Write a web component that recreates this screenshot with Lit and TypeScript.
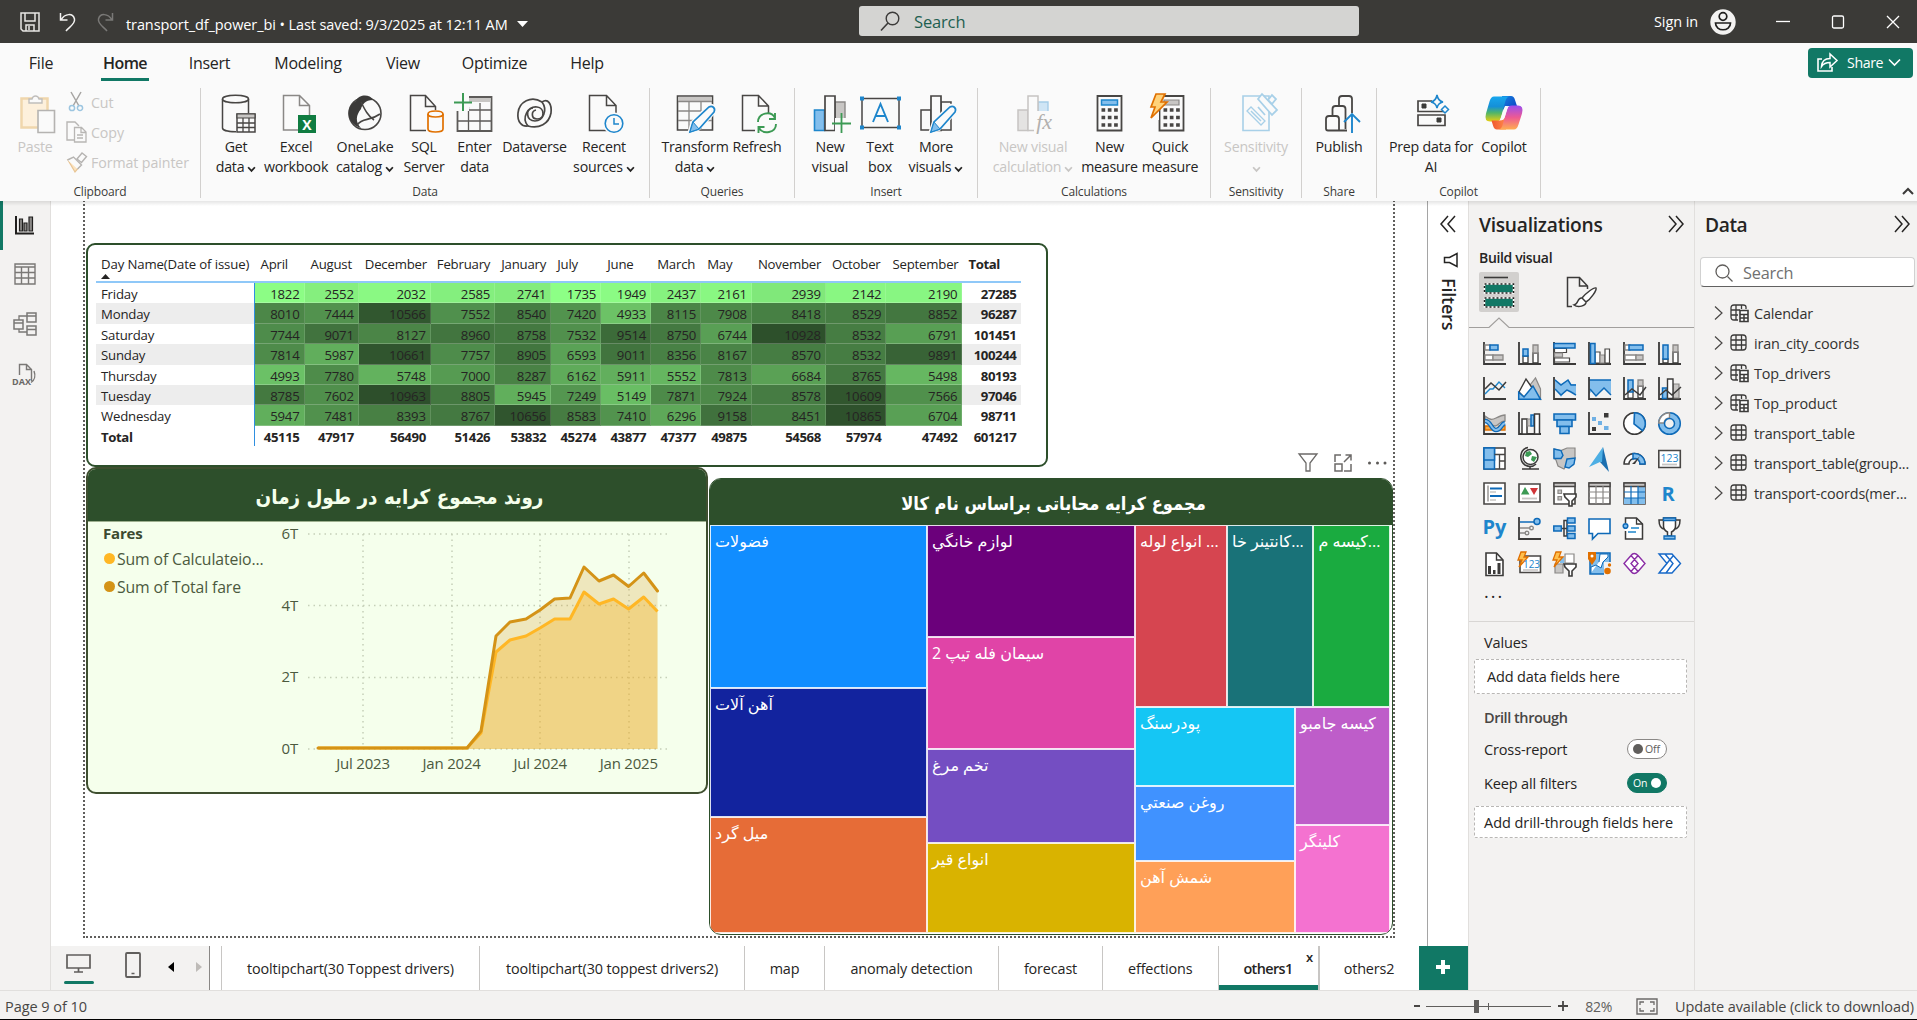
import { LitElement, html, svg, css, nothing } from "lit";
import { customElement, property } from "lit/decorators.js";
import { classMap } from "lit/directives/class-map.js";
import { styleMap } from "lit/directives/style-map.js";

type Shape = [d: string, fill?: string, stroke?: string, width?: number, dash?: string];
interface Icon { w: number; h: number; shapes: Shape[]; text?: [string, number, number, number, string, string] }

const r = (x: number, y: number, w: number, h: number) => `M${x} ${y}h${w}v${h}h${-w}z`;
const c = (x: number, y: number, q: number) => `M${x - q} ${y}a${q} ${q} 0 1 0 ${2 * q} 0a${q} ${q} 0 1 0 ${-2 * q} 0z`;

const N = "none";
const K = "#484644";
const D = "#3b3a39";
const G = "#8a8886";
const LG = "#c8c6c4";
const BF = "#83beec";
const BS = "#0e6ab8";
const B = "#1e86cc";
const W = "#ffffff";
const P = "#fafafa";
const OR = "#e07000";
const AXIS: Shape = ["M1 0V22H23", N, D, 1.8];
const FILE = "M9.500 2.500h16l10 10v24.500H9.500zM25.500 2.500v10h10";
const BOLT = "M8 0H3L0 8h4L1 15L10 5H6z";

const icons: Record<string, Icon> = {
  save: { w: 20, h: 20, shapes: [["M1 1h18v18H3l-2-2z", N, "#e8e6e4", 1.5], ["M5 1v8h10V1M6 19v-6h8v6M9 14v4", N, "#e8e6e4", 1.5]] },
  undo: { w: 18, h: 20, shapes: [["M1.500 1v7h7M2 8C6 1 14 1 15.500 7C16.500 12 10 15 7 19", N, "#f3f2f1", 1.5]] },
  redo: { w: 18, h: 20, shapes: [["M16.500 1v7h-7M16 8C12 1 4 1 2.500 7C1.500 12 8 15 11 19", N, "#7a7977", 1.5]] },
  find: { w: 20, h: 20, shapes: [[c(12.500, 7.500, 6.300), N, D, 1.4], ["M8 12L1 19.500", N, D, 1.6]] },
  user: { w: 26, h: 26, shapes: [[c(13, 13, 12.700), "#f3f2f1"], [c(13, 7.500, 3.800), N, "#201f1e", 1.7], ["M5.500 14h15c0 9-15 9-15 0z", N, "#201f1e", 1.7]] },
  min: { w: 14, h: 14, shapes: [["M0 6.500h14", N, W, 1.3]] },
  max: { w: 14, h: 14, shapes: [["M3 1h8q1.500 0 1.500 1.500v9q0 1.500-1.500 1.500H3q-1.500 0-1.500-1.500v-9Q1.500 1 3 1z", N, W, 1.3]] },
  close: { w: 14, h: 14, shapes: [["M1 1l12 12M13 1L1 13", N, W, 1.3]] },
  share: { w: 21, h: 19, shapes: [["M5 6H1v12h14v-4", N, W, 1.6], ["M4.500 13.500C5 7 8.500 5.500 13 5.500V1l7 6.500l-7 6.500V9.500C9 9.500 6.500 10.500 4.500 13.500z", N, W, 1.5]] },
  paste: { w: 44, h: 40, shapes: [["M8.500 5.500h26v29h-26z", "#fdf0dc", "#f0d6ac", 2.5], ["M16 9V6h3c1-4 6-4 7 0h3v4H16z", P, "#c0bebc", 1.4], ["M25 17.500h16.500v22H25z", P, "#b5b3b1", 1.6]] },
  cut: { w: 22, h: 22, shapes: [["M5 1l8 14M15 1L7 15", N, "#a6a4a2", 1.500], [c(6, 17, 2.600), N, "#9cc5e0", 1.500], [c(14, 17, 2.600), N, "#9cc5e0", 1.500]] },
  copy: { w: 22, h: 22, shapes: [["M9 19H1V1h8l4 4", N, "#b8b6b4", 1.400], ["M8.500 6.500h7l4.500 4.500v10H8.500zM15 6.500v5h5M11 14h6M11 17h6", P, "#b8b6b4", 1.300]] },
  painter: { w: 22, h: 22, shapes: [["M2 9l9 3l3 3l-5 6z", "#fbe3c0", "#e8c493", 1.200], ["M1.500 9l6-3l8 8l-4 4", P, "#b5b3b1", 1.400], ["M11 8l5-6l4.500 3.500l-5 6z", P, "#b5b3b1", 1.400]] },
  getdata: { w: 44, h: 40, shapes: [["M8.500 6v29c0 5 26 5 26 0V6", P, K, 1.500], ["M8.500 6c0-5 26-5 26 0s-26 5-26 0z", P, K, 1.500], [r(22, 20, 20, 20), P], [r(23, 21, 18, 18), P, K, 1.500], [r(23, 21, 18, 4), LG, K, 1.200], ["M29 25v14M35 25v14M23 30h18M23 34.500h18", N, K, 1.300]] },
  excel: { w: 44, h: 40, shapes: [[FILE, P, G, 1.500], [r(24, 22, 18, 18), "#107c41"]], text: ["X", 33, 36.500, 14, "#ffffff", "bold"] },
  onelake: { w: 44, h: 40, shapes: [[c(22, 20.500, 16), P, K, 1.600], ["M13 8C16 1 27 1 30 7C22 7 19 12 18 16C13 22 12 29 18 35C3 30 2 14 13 8z", D], ["M18 9c4 8 7 14 13 18M14 32c6-8 12-3 23-11", N, K, 1.600]] },
  sql: { w: 44, h: 40, shapes: [["M8.500 2.500h15l10 11v24H8.500zM23.500 2.500v11h10", P, K, 1.500], [r(24, 17, 19, 23), P], ["M26 21v15c0 4 15 4 15 0V21", P, OR, 1.700], ["M26 21c0-4 15-4 15 0s-15 4-15 0z", P, OR, 1.700]] },
  enter: { w: 44, h: 40, shapes: [[r(4.500, 4, 34, 34), P, "#5c5a58", 1.800], [r(16, 5, 21.500, 4), LG], ["M5 17h33M5 28h33M15.500 14v24M27 10v28", N, "#5c5a58", 1.300], [r(1, 1, 15, 17), P], ["M10 0v18M1 9.500h18", N, "#3c9a54", 2]] },
  dataverse: { w: 44, h: 40, shapes: [["M29 9C18 2 6 9 5 20c-1 9 4 14 10 13c-7-8 0-20 9-19c8 1 8 12 0 12c-6 0-6-8-1-9", N, K, 1.700], ["M15 33c11 3 21-2 23-13c1-9-3-15-9-11c6 8 1 19-7 19c-9 0-10-12-2-13", N, K, 1.700]] },
  recent: { w: 44, h: 40, shapes: [["M7.500 2.500h17l9.500 10v25H7.500zM24.500 2.500v10h9.500", P, K, 1.500], [c(32, 30.500, 11), P], [c(32, 30.500, 8.800), P, B, 1.600], ["M32 25v6h5", N, B, 1.500]] },
  transform: { w: 44, h: 40, shapes: [[r(4.500, 3, 35, 34), P, K, 1.600], [r(5.500, 4, 33, 4), LG], ["M5 8.500h34M5 18h34M5 27.500h34M16 9v28M28 9v28", N, G, 1.300], ["M17 38l3-9L36 13c3-1 6 1 6 5L25 36z", P, P, 4], ["M17 39l3-10L36 14c3-2 7 1 5 5L26 36z", P, B, 1.700], ["M17 39l3-10l6 7z", BF, B, 1]] },
  refresh: { w: 44, h: 40, shapes: [["M7.500 2.500h16l10 10.500v24.500H7.500zM23.500 2.500v10.500h10", P, K, 1.500], [r(20, 20, 22, 20), P], ["M23 29c0-9 13-12 17-4M40 20v6h-6M41 31c0 9-13 11-17 4M23.500 40v-6h6", N, "#3c9a54", 1.900]] },
  newvisual: { w: 44, h: 40, shapes: [[r(6.500, 17, 10, 20.500), BF, B, 1.600], [r(27, 9, 10, 27), LG, G, 1.400], [r(17, 3, 10, 34.500), P, K, 1.700], [r(27, 25, 15, 15), P], ["M33.500 20v20M24 30.500h19", N, "#3c9a54", 1.800]] },
  textbox: { w: 44, h: 40, shapes: [[r(4, 5.500, 37, 29), P, K, 1.500], [r(2, 3.500, 4, 4), B], [r(39, 3.500, 4, 4), B], [r(2, 32.500, 4, 4), B], [r(39, 32.500, 4, 4), B], ["M15 29L22.500 11L30 29M18 23h9", N, B, 1.900]] },
  morevisuals: { w: 44, h: 40, shapes: [[r(7, 17, 10, 20), P, K, 1.500], [r(27, 9, 10, 28), P, K, 1.500], [r(17, 3, 10, 34.500), P, K, 1.700], ["M17 38l3-9L36 13c3-1 6 1 6 5L25 36z", P, P, 4], ["M17 39l3-10L36 14c3-2 7 1 5 5L26 36z", P, B, 1.700], ["M17 39l3-10l6 7z", BF, B, 1]] },
  calcvisual: { w: 44, h: 40, shapes: [[r(7, 17, 10, 20.500), "#e4e3e2", "#c6c4c2", 1.500], [r(27, 9, 10, 16), "#cfe5f5", "#a5cde8", 1.400], [r(17, 3, 10, 34.500), P, "#c6c4c2", 1.500], [r(23, 18, 20, 22), P]], text: ["fx", 33, 36, 22, "#b2b0ae", "fx"] },
  calculator: { w: 44, h: 40, shapes: [[r(9.500, 3, 24, 34.500), P, K, 1.800], [r(13.500, 7, 16, 5), BF, B, 1.500], ["M13.500 17h16.500M13.500 24.500h16.500M13.500 32h16.500", N, K, 3.700, "3.700 2.600"]] },
  quick: { w: 44, h: 40, shapes: [[r(11.500, 3, 24, 34.500), P, K, 1.800], [r(16, 7, 15, 5), LG, G, 1.200], ["M15.500 17h16.500M15.500 24.500h16.500M15.500 32h16.500", N, K, 3.700, "3.700 2.600"], [r(2, 0, 9, 27), P], ["M8 1h9L13 9h6L3 25l4-11H3z", "#ffd27a", OR, 1.700]] },
  sensitivity: { w: 44, h: 40, shapes: [["M9 3h26v34.500H9z", P, "#a8d0e8", 1.600], ["M13 18l4-4l14 14l-4 4z", P, "#a8d0e8", 1.300], ["M17 18l10 10", N, "#a8d0e8", 1.500], ["M24 6l4-5l15 16l-5 5z", P, "#a8d0e8", 1.800], ["M34 7l4-5l4 4l-4 5zM24 14l7 8", P, "#a8d0e8", 1.800]] },
  publish: { w: 44, h: 40, shapes: [["M22 14V6q0-3 3-3h7q3 0 3 3v14M15.500 23V16q0-3 3-3h7q3 0 3 3v20M9 36V26q0-3 3-3h7q3 0 3 3v11.500H11q-2 0-2-2zM22 37.500h8", N, K, 1.800], ["M35 40V21M27 29l8-8l8 8", N, B, 1.900]] },
  prep: { w: 44, h: 40, shapes: [["M23 8H9v10.500h27V18M9 22h27v10.500H9z", N, K, 1.700], [r(13, 11, 4, 4), D, D, 1], [r(28, 25, 4, 4), D, D, 1], ["M28 2q1 6 6 7q-5 1-6 6q-1-5-6-6q5-1 6-7z", P, B, 1.600], ["M36 13l3.500 3.500L36 20l-3.500-3.500z", P, B, 1.500]] },
  report: { w: 20, h: 20, shapes: [["M1 1v17.500h18", N, "#201f1e", 2], [r(4.500, 4, 3, 12), G, "#201f1e", 1.200], [r(9, 8, 3, 8), G, "#201f1e", 1.200], [r(14, 2, 3.500, 14), G, "#201f1e", 1.200]] },
  table: { w: 22, h: 22, shapes: [[r(1, 1, 20, 20), N, "#7a7876", 1.400], ["M1 4h20M1 9.500h20M1 15h20M7.500 4v17M14.500 4v17", N, "#7a7876", 1.400]] },
  model: { w: 24, h: 24, shapes: [[r(1, 8, 9, 9), N, "#7a7876", 1.500], [r(14, 1, 9, 9), N, "#7a7876", 1.500], [r(14, 14, 9, 9), N, "#7a7876", 1.500], ["M1 11h9M14 4h9M14 17.500h9M6 8V4h8M6 17v3h8", N, "#7a7876", 1.300]] },
  dax: { w: 24, h: 24, shapes: [["M6.500 12V1.500h7l5 5V18M13.500 1.500v5h5M21 8c1.500 4 1 9-3 11.500", N, "#7a7876", 1.400]], text: ["DAX", 8.500, 21.500, 9, "#6a6866", "bold"] },
  filter: { w: 20, h: 20, shapes: [["M1 1h18L12 10v8H8v-8z", N, "#6c6a68", 1.300]] },
  focus: { w: 20, h: 20, shapes: [["M8 2H2v7M18 11v7h-7M2 11h7v7H2zM11 9l7-7M12.500 2H18v5.500", N, "#6c6a68", 1.500]] },
  dots: { w: 20, h: 20, shapes: [[c(1.500, 10, 1.500) + c(9.500, 10, 1.500) + c(17, 10, 1.500), "#5c5a58"]] },
  monitor: { w: 26, h: 20, shapes: [[r(1, 1, 23, 13), N, "#605e5c", 1.700], ["M12.500 14v4M8 18h9", N, "#605e5c", 1.700]] },
  phone: { w: 18, h: 26, shapes: [["M3 1h12q1 0 1 1v22q0 1-1 1H3q-1 0-1-1V2Q2 1 3 1z", N, "#605e5c", 1.800], ["M7.500 21.500h3", N, "#605e5c", 1.500]] },
  fit: { w: 22, h: 17, shapes: [[r(1, 1, 20, 15), N, "#6c6a68", 1.400], ["M4 7V4h4M14 4h4v3M18 10v3h-4M8 13H4v-3", N, "#6c6a68", 1.300]] },
  less: { w: 18, h: 18, shapes: [["M9 1L2 9l7 8M16 1L9 9l7 8", N, "#252423", 1.500]] },
  more: { w: 18, h: 18, shapes: [["M2 1l7 8l-7 8M9 1l7 8l-7 8", N, "#252423", 1.500]] },
  funnel: { w: 16, h: 16, shapes: [["M14 1.500v13L6.500 10.500H1.500v-5h5z", N, "#252423", 1.500]] },
  build: { w: 32, h: 32, shapes: [["M1 1.500h24", N, D, 1.600], [r(1.500, 8, 29, 9), "#117865", W, 1.500], [r(1.500, 8, 29, 9), N, "#201f1e", 1.500, "2 2"], [r(1.500, 22, 29, 9), "#117865", W, 1.500], [r(1.500, 22, 29, 9), N, "#201f1e", 1.500, "2 2"]] },
  format: { w: 32, h: 32, shapes: [["M6 30.500H1.500V1.500h12l8 8.500v3M13.500 1.500V10h8", N, D, 1.500], ["M30 12c1 2-5 11-10 14l-4-4c4-5 12-11 14-10zM16 22c-5-1-3 6-8 7c4 3 12 1 12-3", W, D, 1.500]] },
  loupe: { w: 18, h: 18, shapes: [[c(7.500, 7.500, 6.500), N, "#605e5c", 1.300], ["M12.500 12.500L17.500 17.500", N, "#605e5c", 1.300]] },
  expand: { w: 9, h: 16, shapes: [["M1 1.500l7 6.500l-7 6.500", N, "#484644", 1.200]] },
  tbl: { w: 20, h: 20, shapes: [["M4 2h9q3 0 3 3v9q0 3-3 3H4q-3 0-3-3V5q0-3 3-3zM1 7h15M1 12h15M6 2v15M11.500 2v15", N, D, 1.300]] },
  tblcalc: { w: 20, h: 20, shapes: [["M8 17H4q-3 0-3-3V5q0-3 3-3h9q3 0 3 2v2M1 7h9M1 12h7M6 2v15M11.500 2v4", N, D, 1.300], [r(10, 7.500, 8, 11), W, D, 1.600], ["M10 11.500h8M10 15h8M14 11v7", N, D, 1.500]] },

  v0: { w: 23, h: 23, shapes: [AXIS, [r(2, 3, 5, 5), W, G, 1.300], [r(7, 3, 8, 5), BF, BS, 1.500], [r(2, 13, 8, 5), W, G, 1.300], [r(10, 13, 10, 5), LG, G, 1.300]] },
  v1: { w: 23, h: 23, shapes: [AXIS, [r(5, 14, 5, 7), W, D, 1.300], [r(5, 7, 5, 7), BF, BS, 1.500], [r(15, 11, 5, 10), W, D, 1.300], [r(15, 3, 5, 8), LG, G, 1.300]] },
  v2: { w: 23, h: 23, shapes: [AXIS, [r(1.500, 6.500, 12, 4), W, K, 1.200], [r(1.500, 11, 8, 4), LG, G, 1.200], [r(1.500, 16, 15, 4), W, K, 1.200], [r(1, 1.500, 21, 4.500), BF, BS, 1.500]] },
  v3: { w: 23, h: 23, shapes: [AXIS, [r(7, 10, 5, 11), W, K, 1.200], [r(12, 13, 5, 8), LG, G, 1.200], [r(17, 7, 4.500, 14), W, K, 1.200], [r(2.500, 1.500, 4.500, 20), BF, BS, 1.500]] },
  v4: { w: 23, h: 23, shapes: [AXIS, [r(2, 3, 5, 5), W, G, 1.300], [r(6, 3, 14, 5), BF, BS, 1.500], [r(2, 13, 11, 5), W, G, 1.300], [r(13, 13, 7, 5), LG, G, 1.300]] },
  v5: { w: 23, h: 23, shapes: [AXIS, [r(5, 17, 5, 4), W, D, 1.300], [r(5, 3, 5, 14), BF, BS, 1.500], [r(15, 10, 5, 11), W, D, 1.300], [r(15, 3, 5, 7), LG, G, 1.300]] },
  v6: { w: 23, h: 23, shapes: [AXIS, ["M2 17L7 12l3 0L16 5l6 6", N, B, 1.400], ["M2 12l6-6l8 7l7-8", N, D, 1.500]] },
  v7: { w: 23, h: 23, shapes: [["M12 8L17.500 1L22.500 12v10z", LG, G, 1.200], ["M1 15L8 2l7 10L8 22z", W, D, 1.400], ["M.7 22.300v-7L6 20L15 9l7.500 13.300z", BF, BS, 1.500]] },
  v8: { w: 23, h: 23, shapes: [AXIS, ["M2 2l6 5l7-4l3 4h5v10l-5-2l-4-3l-6 8L2 12z", BF], ["M2 3l6 5l7-5l3 5h5M2 12l6 6l6-5l4 2l5 3", N, BS, 1.500]] },
  v9: { w: 23, h: 23, shapes: [["M1 3h22v14l-7-6l-8 8l-4-5l-3 3z", BF], ["M1 3h22M2 12l6 7l8-8l7 7", N, BS, 1.500], AXIS] },
  v10: { w: 23, h: 23, shapes: [AXIS, [r(5, 14, 5, 7), W, D, 1.200], [r(5, 3, 5, 12), BF, BS, 1.500], [r(15, 9, 5, 12), W, D, 1.300], [r(15, 3, 5, 6), LG, G, 1.300], ["M2 18l7-6l8 6l6-8", N, D, 1.500]] },
  v11: { w: 23, h: 23, shapes: [AXIS, [r(4.500, 11, 5, 10.500), BF, BS, 1.500], [r(15, 7, 6, 14), LG, G, 1.200], [r(9.500, 2, 5.500, 19.500), W, D, 1.400], ["M2 18l6-5l6 5l9-8", N, D, 1.500]] },
  v12: { w: 23, h: 23, shapes: [["M2 14h6l3 4h11v-4h-6l-3 4H2z", "#f4a640", OR, 1.300], ["M2 4c5 4 7 4 11 2s6-3 9-3v6c-5 0-7 5-10 5S7 9 2 9z", LG, G, 1.300], ["M2 9c6 0 6 9 11 9s5-6 9-7", N, BS, 4.500], ["M2 9c6 0 6 9 11 9s5-6 9-7", N, BF, 2], AXIS] },
  v13: { w: 23, h: 23, shapes: [AXIS, [r(4, 7, 5, 15), W, D, 1.500], [r(9.500, 7, 4, 7), LG, G, 1.200], [r(13, 3, 3, 11), BF, BS, 1.500], [r(16.500, 2, 5, 20), W, D, 1.500]] },
  v14: { w: 23, h: 23, shapes: [[r(1, 2, 21.500, 6), BF, BS, 1.600], [r(4, 8, 15, 6.500), BF, BS, 1.600], [r(7, 14.500, 9, 7), BF, BS, 1.600]] },
  v15: { w: 23, h: 23, shapes: [AXIS, [r(4, 5, 4, 4) + r(10, 9, 4, 4) + r(16, 14, 4.500, 4), "#6fb0e4"], [r(16, 1, 4.500, 4.500) + r(4, 15, 4, 4), D]] },
  v16: { w: 23, h: 23, shapes: [[c(11.500, 11.500, 10.800), W, D, 1.500], ["M11.500.700a10.800 10.800 0 0 1 8 18L11 12z", BF, BS, 1.600]] },
  v17: { w: 23, h: 23, shapes: [[c(11.500, 11.500, 10.800), BF, BS, 1.500], ["M.700 11a10.800 10.800 0 0 1 10.800-10.300V6A6 6 0 0 0 6 11z", W, G, 1.400], [c(11.500, 11.500, 5), "#f3f2f1", BS, 1.500]] },
  v18: { w: 23, h: 23, shapes: [[r(1, 1, 21, 21), W, D, 1.500], [r(1, 1, 10.500, 21), BF, BS, 1.500], [r(1, 1, 10.500, 12), BF, BS, 1.500], ["M11.500 7.500H22M16.500 8v14M16.500 14H22", N, K, 1.300]] },
  v19: { w: 23, h: 23, shapes: [[c(12.500, 10, 7.500), W, D, 1.500], ["M8 5l4-1l2 3l-4 3l-3-1zM14 9l5 1l-3 5l-3-2z", "#3c9a54"], ["M10 0.500C1 2 1 14 7 18c4 2 8 2 11-1M12 19v3M4 22h17", N, D, 1.600]] },
  v20: { w: 23, h: 23, shapes: [["M1 2l7 1.500l6-2.500h8v11l-2 6l-7 1l-2 3l-6-3l-2-6l-2-2z", LG, G, 1.200], ["M1 2l7 1.500l2 5l-2 3H1z", BF, BS, 1.400], ["M14 12l8-1l-1 6l-5 4l-4-1z", BF, BS, 1.400]] },
  v21: { w: 23, h: 25, shapes: [["M15 0l6 25l-9-10z", "#1b6fb0"], ["M15 0l-1 15l-2 0L1 20z", "#4dafe4"]] },
  v22: { w: 23, h: 23, shapes: [["M1 17a10.500 10.500 0 0 1 21 0h-5a5.500 5.500 0 0 0-11 0z", W, D, 1.400], ["M10 6.500A10.500 10.500 0 0 1 22 17h-5a5 5 0 0 0-7-5z", BF, BS, 1.500], ["M9 17l8-8l-5 8z", D]] },
  v23: { w: 23, h: 23, shapes: [[r(.8, 3.500, 21.500, 17), W, K, 1.600], ["M4 17.500h15", N, LG, 1.800]], text: ["123", 11.500, 14.500, 10.500, "#1e86cc", "plain"] },
  v24: { w: 23, h: 23, shapes: [[r(1, 1, 21, 21), W, K, 1.600], ["M5 3.500v16", N, G, 1.300], ["M7 6.500h12M7 14h12", N, BS, 2], ["M7 10h6M7 18h6", N, LG, 1.600]] },
  v25: { w: 23, h: 23, shapes: [[r(1, 2, 21, 18), W, K, 1.600], ["M3 12.500L7 5l4.500 7.500z", "#3c9a54"], ["M12 6h8l-4 7z", "#d13438"], ["M4 16.500h15", N, LG, 1.800]] },
  v26: { w: 23, h: 25, shapes: [[r(1, 1, 21, 21), W, K, 1.600], [r(1, 1, 21, 3.500), LG, K, 1.300], [r(5, 8, 3.500, 3.500) + r(5, 14.500, 3.500, 3.500), LG, G, 1.200], ["M11 12h12v3l-4 4v5h-3v-5l-4-4z", W, D, 1.600]] },
  v27: { w: 23, h: 23, shapes: [[r(1, 1, 21, 21), W, K, 1.500], [r(1, 1, 21, 3.500), LG, K, 1.300], ["M1 10h21M1 16h21M8 4v18M15 4v18", N, G, 1.200]] },
  v28: { w: 23, h: 23, shapes: [[r(1, 1, 21, 21), W, K, 1.500], [r(15, 5, 7, 17) + r(1, 16, 21, 6), BF], [r(1, 1, 21, 3.500), LG, K, 1.300], ["M1 10h21M1 16h21M8 4v18M15 4v18", N, BS, 1.200]] },
  v29: { w: 23, h: 23, shapes: [], text: ["R", 10, 18.500, 20, "#1e86cc", "bold"] },
  v30: { w: 23, h: 23, shapes: [], text: ["Py", 11.500, 16.500, 20, "#1e86cc", "bold"] },
  v31: { w: 23, h: 23, shapes: [AXIS, ["M2 5h14", N, BS, 1.500], ["M2 11h10M2 16h6", N, G, 1.500], [c(19, 4.500, 3), BF, BS, 1.500], [c(13.500, 11, 1.800) + c(9, 16, 1.800), W, G, 1.400]] },
  v32: { w: 23, h: 23, shapes: [["M8 11.500h6M14 3.500V19h1M11 11.500V3.500h3M11 11.500V19h3", N, D, 1.500], [r(.8, 9, 7.500, 5), BF, BS, 1.500], [r(14.500, 1, 7.500, 5), BF, BS, 1.500], [r(14.500, 9, 7.500, 5), BF, BS, 1.500], [r(14.500, 16.500, 7.500, 5), BF, BS, 1.500]] },
  v33: { w: 23, h: 23, shapes: [["M1 2h21v14.500H10L4.500 22v-5.500H1z", W, BS, 1.600]] },
  v34: { w: 23, h: 23, shapes: [["M2.500 6V1h11l6 6v15h-17V14", W, D, 1.500], ["M13.500 1v6h6", N, D, 1.300], ["M8 11h8M5 15h8", N, B, 1.400], [c(2.500, 9, 2.300), BF, BS, 1.500]] },
  v35: { w: 23, h: 23, shapes: [["M5 3H1c0 6 2 9 6 9M18 3h4c0 6-2 9-6 9", N, D, 1.500], ["M5.500 1h12v8c0 3-2 5-4 6v4h-4v-4c-2-1-4-3-4-6z", W, D, 1.500], ["M5.500 1h12v2.500h-12z", BF, BS, 1.300], ["M6 22v-3h11v3z", BF, BS, 1.300]] },
  v36: { w: 23, h: 25, shapes: [["M3 1h10.500l6.500 7v15.500H3z", W, D, 1.600], ["M13.500 1v7H20", N, D, 1.400], [r(5, 14, 3, 8) + r(10, 18, 2.500, 4) + r(14.500, 11, 3, 11), D]] },
  v37: { w: 23, h: 25, shapes: [[r(2, 4, 20.500, 16.500), W, K, 1.600], ["M5 18h15", N, LG, 1.600], [BOLT, "#ffc04d", OR, 1.300]], text: ["123", 13.500, 15.500, 10, "#1e86cc", "plain"] },
  v38: { w: 23, h: 25, shapes: [[r(12, 2, 9, 9), W, G, 1.200], [r(2, 12, 8, 9), LG, G, 1.200], [r(7, 5, 4, 6), BF], ["M11 12h12v3l-4 4v5h-3v-5l-4-4z", W, D, 1.600], [BOLT, "#ffc04d", OR, 1.300]] },
  v39: { w: 23, h: 23, shapes: [[r(2, 1, 20, 21), BF, BS, 1.500], ["M3 21V15l5-2l5 3l2-6l5-5V2h-8l-1 8", W, BS, 1], [r(16, 10, 7, 13), "#f3f2f1"], ["M0 0h8v7l-4 6l-4-6z", OR], [c(4, 4, 1.500), W], [c(19.500, 19, 3.300) + c(21.500, 13, 1.700), OR]] },
  v40: { w: 23, h: 23, shapes: [["M1 11.500L8 3.500q3-4 7 0l7 8l-7 8q-4 4-7 0zM8 3.500l7 8l-7 8M15 3.500l-7 8l7 8", W, "#8a2da5", 1.400]] },
  v41: { w: 23, h: 23, shapes: [["M1 2h13l8.500 9.500L14 21H1l8-9.500zM7 2l8 9.500L8 21M15 4L1 21", W, "#1668c8", 1.400]] },
};

@customElement("pb-icon")
class PbIcon extends LitElement {
  static styles = css`
    :host { display: inline-block; line-height: 0; flex: none; }
    svg { display: block; overflow: visible; }
    .bold { font: 700 1px "Open Sans", sans-serif; letter-spacing: 0; }
    .plain { font: 400 1px "Open Sans", sans-serif; letter-spacing: 0; }
    .fx { font: italic 1px "Liberation Serif", serif; }
  `;
  @property() name = "";
  render() {
    const i = icons[this.name];
    if (!i) return nothing;
    const t = i.text;
    return html`<svg width=${i.w} height=${i.h} viewBox="0 0 ${i.w} ${i.h}">
      ${i.shapes.map(([d, f = N, s = N, w = 1, dash = N]) => svg`<path d=${d} fill=${f} stroke=${s} stroke-width=${w} stroke-dasharray=${dash}></path>`)}
      ${t ? svg`<text class=${t[5]} x=${t[1]} y=${t[2]} style=${styleMap({ fontSize: t[3] + "px" })} fill=${t[4]} text-anchor="middle">${t[0]}</text>` : nothing}
    </svg>`;
  }
}

@customElement("copilot-logo")
class CopilotLogo extends LitElement {
  static styles = css`:host { display: block; line-height: 0; } svg { display: block; }`;
  render() {
    return html`<svg width="44" height="40" viewBox="0 0 44 40">
      <defs>
        <linearGradient id="a" x1="0" y1="0" x2="0" y2="1"><stop offset="0" stop-color="#17a6ee"/><stop offset=".4" stop-color="#1590d8"/><stop offset=".65" stop-color="#4fb56a"/><stop offset="1" stop-color="#e8cf10"/></linearGradient>
        <linearGradient id="b" x1="0" y1="0" x2="0" y2="1"><stop offset="0" stop-color="#9a4df0"/><stop offset=".5" stop-color="#ee5a92"/><stop offset="1" stop-color="#ffae50"/></linearGradient>
        <linearGradient id="c" x1="0" y1="0" x2="1" y2="1"><stop offset="0" stop-color="#1583e0"/><stop offset="1" stop-color="#0c3cc0"/></linearGradient>
        <linearGradient id="d" x1="0" y1="0" x2="1" y2="0"><stop offset="0" stop-color="#f0562e"/><stop offset="1" stop-color="#ff8a4a"/></linearGradient>
      </defs>
      <path d="M20 3h9q3 0 4 4l2 6h-8q-5 0-6 5z" fill="url(#c)"/>
      <path d="M12 3.500h15q-3 1-4 6l-4 15q-1 4-5 4H8q-6 0-4-8l3.500-12Q9 3.500 12 3.500z" fill="url(#a)"/>
      <path d="M24 36.500h-9q-3 0-4-4l-1.500-5h8q5 0 6-5z" fill="url(#d)"/>
      <path d="M32 36.500H17q3-1 4-6l4-14q1-4 5-4h6q6 0 4 8l-3.500 11q-1.500 5-4.500 5z" fill="url(#b)"/>
      <path d="M25 13h-2l-5 14h2q2 0 3-4l3-9z" fill="#fafafa"/>
    </svg>`;
  }
}

interface Cmd { icon: string; w: number; lines: string[]; drop?: boolean; off?: boolean }
interface Group { name: string; w: number; pad: number; cmds: Cmd[] }

const groups: Group[] = [
  { name: "Data", w: 449, pad: 2, cmds: [
    { icon: "getdata", w: 66, lines: ["Get", "data"], drop: true },
    { icon: "excel", w: 54, lines: ["Excel", "workbook"] },
    { icon: "onelake", w: 84, lines: ["OneLake", "catalog"], drop: true },
    { icon: "sql", w: 34, lines: ["SQL", "Server"] },
    { icon: "enter", w: 67, lines: ["Enter", "data"] },
    { icon: "dataverse", w: 53, lines: ["Dataverse"] },
    { icon: "recent", w: 86, lines: ["Recent", "sources"], drop: true } ] },
  { name: "Queries", w: 145, pad: 2, cmds: [
    { icon: "transform", w: 86, lines: ["Transform", "data"], drop: true },
    { icon: "refresh", w: 38, lines: ["Refresh"] } ] },
  { name: "Insert", w: 183, pad: 8, cmds: [
    { icon: "newvisual", w: 54, lines: ["New", "visual"] },
    { icon: "textbox", w: 46, lines: ["Text", "box"] },
    { icon: "morevisuals", w: 66, lines: ["More", "visuals"], drop: true } ] },
  { name: "Calculations", w: 233, pad: 4, cmds: [
    { icon: "calcvisual", w: 102, lines: ["New visual", "calculation"], drop: true, off: true },
    { icon: "calculator", w: 51, lines: ["New", "measure"] },
    { icon: "quick", w: 70, lines: ["Quick", "measure"] } ] },
  { name: "Sensitivity", w: 91, pad: 0, cmds: [{ icon: "sensitivity", w: 90, lines: ["Sensitivity", ""], drop: true, off: true }] },
  { name: "Share", w: 75, pad: 0, cmds: [{ icon: "publish", w: 74, lines: ["Publish"] }] },
  { name: "Copilot", w: 164, pad: 9, cmds: [
    { icon: "prep", w: 90, lines: ["Prep data for", "AI"] },
    { icon: "copilot", w: 56, lines: ["Copilot"] } ] },
];

@customElement("pb-ribbon")
class PbRibbon extends LitElement {
  static styles = css`
    :host { display: flex; height: 120px; padding-top: 7px; box-sizing: border-box; background: #fafafa; color: #252423; font-size: 14.200px; letter-spacing: -0.220px; }
    .group { display: flex; flex-direction: column; height: 110px; box-sizing: border-box; border-right: 1px solid #d2d0ce; flex: none; }
    .clip { width: 201px; }
    .cmds { display: flex; height: 95px; flex: none; }
    .cmd { display: flex; flex-direction: column; align-items: center; flex: none; padding-top: 5px; }
    .cmd.paste { width: 70px; }
    .line { height: 20px; line-height: 20px; white-space: nowrap; display: flex; align-items: center; gap: 3px; flex: none; }
    .line.first { margin-top: 4px; }
    .off { color: #c8c6c4; }
    .name { text-align: center; font-size: 12px; line-height: 17px; color: #3b3a39; letter-spacing: -0.150px; }
    .drop { width: 9px; height: 7px; margin-top: 4px; }
    .side { display: flex; flex-direction: column; margin: -1px 0 0 -4px; letter-spacing: -0.080px; }
    .mini { display: flex; align-items: center; height: 30px; gap: 3px; color: #c8c6c4; white-space: nowrap; }
    .end { flex: 1; display: flex; align-items: flex-end; justify-content: flex-end; padding: 0 3px 6px 0; }
  `;
  private drop() {
    return html`<svg class="drop" viewBox="0 0 8 6"><path d="M1 1l3 3.200l3-3.200" fill="none" stroke="currentColor" stroke-width="1.600"></path></svg>`;
  }
  private cmd(x: Cmd) {
    return html`<div class=${classMap({ cmd: true, off: !!x.off })} style=${styleMap({ width: x.w + "px" })}>
      ${x.icon === "copilot" ? html`<copilot-logo></copilot-logo>` : html`<pb-icon name=${x.icon}></pb-icon>`}
      ${x.lines.map((l, i) => html`<div class=${classMap({ line: true, first: i === 0 })}>${l ? html`<span>${l}</span>` : nothing}${x.drop && i === x.lines.length - 1 ? this.drop() : nothing}</div>`)}
    </div>`;
  }
  render() {
    return html`
      <div class="group clip">
        <div class="cmds">
          <div class="cmd off paste"><pb-icon name="paste"></pb-icon><div class="line first">Paste</div></div>
          <div class="side">
            ${[["cut", "Cut"], ["copy", "Copy"], ["painter", "Format painter"]].map(([i, t]) => html`<div class="mini"><pb-icon name=${i}></pb-icon>${t}</div>`)}
          </div>
        </div>
        <div class="name">Clipboard</div>
      </div>
      ${groups.map((g) => html`<div class="group" style=${styleMap({ width: g.w + "px" })}>
        <div class="cmds" style=${styleMap({ paddingLeft: g.pad + "px" })}>${g.cmds.map((x) => this.cmd(x))}</div>
        <div class="name">${g.name}</div>
      </div>`)}
      <div class="end"><svg width="12" height="8" viewBox="0 0 12 8"><path d="M1 7l5-5l5 5" fill="none" stroke="#3b3a39" stroke-width="2"></path></svg></div>`;
  }
}

const months = ["April", "August", "December", "February", "January", "July", "June", "March", "May", "November", "October", "September"];
const days: [string, number[], number][] = [
  ["Friday", [1822, 2552, 2032, 2585, 2741, 1735, 1949, 2437, 2161, 2939, 2142, 2190], 27285],
  ["Monday", [8010, 7444, 10566, 7552, 8540, 7420, 4933, 8115, 7908, 8418, 8529, 8852], 96287],
  ["Saturday", [7744, 9071, 8127, 8960, 8758, 7532, 9514, 8750, 6744, 10928, 8532, 6791], 101451],
  ["Sunday", [7814, 5987, 10661, 7757, 8905, 6593, 9011, 8356, 8167, 8570, 8532, 9891], 100244],
  ["Thursday", [4993, 7780, 5748, 7000, 8287, 6162, 5911, 5552, 7813, 6684, 8765, 5498], 80193],
  ["Tuesday", [8785, 7602, 10963, 8805, 5945, 7249, 5149, 7871, 7924, 8578, 10609, 7566], 97046],
  ["Wednesday", [5947, 7481, 8393, 8767, 10656, 8583, 7410, 6296, 9158, 8451, 10865, 6704], 98711],
];
const totals = [45115, 47917, 56490, 51426, 53832, 45274, 43877, 47377, 49875, 54568, 57974, 47492];
const heat = (v: number) => {
  const t = (v - 1735) / (10963 - 1735);
  const m = (a: number, b: number) => Math.round(a + (b - a) * t);
  return `rgb(${m(141, 45)}, ${m(255, 79)}, ${m(134, 43)})`;
};

@customElement("matrix-visual")
class MatrixVisual extends LitElement {
  static styles = css`
    :host { display: block; box-sizing: border-box; background: #fff; border: 2px solid #2d4f2b; border-radius: 9px; padding: 6px 0 0 8px; color: #252423; font-size: 13.200px; letter-spacing: -0.200px; }
    .grid { display: grid; width: 926px; grid-template-columns: 159px 50px 54.300px 72px 64.400px 56px 50px 50px 50px 50.700px 74px 60.600px 76px 59px; grid-template-rows: 32px repeat(7, 20.400px) 20.400px; }
    .h { padding: 4px 0 0 6px; line-height: 19px; white-space: nowrap; border-bottom: 2px solid #8fc8f8; }
    .h.day { display: flex; flex-direction: column; letter-spacing: -0.130px; }
    .tri { width: 9px; height: 5px; background: #252423; clip-path: polygon(50% 0, 100% 100%, 0 100%); flex: none; }
    .day { padding-left: 5.500px; line-height: 22.500px; border-right: 1px solid #2f8fe0; }
    .h.day { border-right: 0; line-height: 19px; padding-left: 5.500px; }
    .num { padding-right: 5px; line-height: 22.500px; text-align: right; }
    .cell { border-right: 1px solid rgba(255, 255, 255, 0.130); border-bottom: 1px solid rgba(255, 255, 255, 0.220); padding-right: 4px; }
    .band { background: #ededed; }
    .b { font-weight: 700; letter-spacing: -0.400px; }
  `;
  render() {
    return html`<div class="grid">
      <div class="h day">Day Name(Date of issue)<span class="tri"></span></div>
      ${months.map((m) => html`<div class="h">${m}</div>`)}<div class="h b">Total</div>
      ${days.map(([d, v, s], i) => html`<div class=${classMap({ day: true, band: i % 2 === 1 })}>${d}</div>
        ${v.map((n) => html`<div class="num cell" style=${styleMap({ background: heat(n) })}>${n}</div>`)}
        <div class=${classMap({ num: true, b: true, band: i % 2 === 1 })}>${s}</div>`)}
      <div class="day b">Total</div>${totals.map((n) => html`<div class="num b">${n}</div>`)}<div class="num b">601217</div>
    </div>`;
  }
}

const xs = [481, 496, 510, 526, 540, 554.6, 570, 584, 599, 613.5, 628.6, 643.7, 657.5];
const upper = [732, 637, 623, 620, 611, 600, 599, 568, 582, 576, 587.5, 574, 592];
const lower = [734, 653, 641, 637, 629, 620, 620, 593, 605, 600, 610, 598, 612.5];
const path = (ys: number[]) => "M318 749H467" + xs.map((x, i) => `L${x} ${ys[i]}`).join("");

@customElement("trend-visual")
class TrendVisual extends LitElement {
  static styles = css`
    :host { display: flex; flex-direction: column; box-sizing: border-box; border: 2px solid #3f4f30; border-radius: 10px; overflow: hidden; background: #f5ffec; color: #4c5a3e; }
    .title { height: 52px; flex: none; background: #2d4f2b; color: #f5ffec; text-align: center; font: 700 20.400px/57px "DejaVu Sans Condensed", "DejaVu Sans", sans-serif; letter-spacing: 0; border-bottom: 1px solid #9db08f; direction: rtl; padding-left: 5px; }
    .body { display: flex; flex: 1; }
    .legend { width: 192px; flex: none; padding: 1px 0 0 15px; box-sizing: border-box; font-size: 15.800px; letter-spacing: -0.130px; }
    .legend b { display: block; line-height: 20px; height: 22px; font-size: 15px; letter-spacing: -0.200px; color: #3c4a30; }
    .item { display: flex; align-items: center; gap: 2px; height: 28px; white-space: nowrap; margin-left: 1px; }
    .dot { width: 11px; height: 11px; border-radius: 50%; background: #ffb725; flex: none; margin-top: -2px; }
    .dot.t { background: #d49317; }
    svg { display: block; }
    text { font-size: 15px; fill: #4c5a3e; letter-spacing: -0.200px; }
  `;
  render() {
    return html`<div class="title">روند مجموع کرایه در طول زمان</div>
      <div class="body">
        <div class="legend"><b>Fares</b>
          <div class="item"><span class="dot"></span>Sum of Calculateio...</div>
          <div class="item"><span class="dot t"></span>Sum of Total fare</div>
        </div>
        <svg width="426" height="268" viewBox="280 523 426 268">
          <g stroke="#c5d0b8" stroke-width="1.500" stroke-dasharray="1.500 4">
            ${[535, 606.5, 678.5, 750].map((y) => svg`<path d="M308 ${y}H667"></path>`)}
            ${[363, 452, 540, 629].map((x) => svg`<path d="M${x} 535V750"></path>`)}
          </g>
          <path d="${path(upper)}V750H318z" fill="#d49317" fill-opacity=".22"></path>
          <path d="${path(lower)}V750H318z" fill="#f4b52c" fill-opacity=".38"></path>
          <path d=${path(lower)} fill="none" stroke="#ffb725" stroke-width="3" stroke-linejoin="round"></path>
          <path d=${path(upper)} fill="none" stroke="#d49317" stroke-width="3" stroke-linejoin="round" stroke-linecap="round"></path>
          ${["6T", "4T", "2T", "0T"].map((t, i) => svg`<text x="298" y=${540 + i * 71.6} text-anchor="end">${t}</text>`)}
          ${["Jul 2023", "Jan 2024", "Jul 2024", "Jan 2025"].map((t, i) => svg`<text x=${363 + i * 88.6} y="770" text-anchor="middle">${t}</text>`)}
        </svg>
      </div>`;
  }
}

interface Tile { label: string; color: string; h: number }
const first: Tile[] = [
  { label: "فضولات", color: "#118dff", h: 162.5 },
  { label: "آهن آلات", color: "#12239e", h: 129.5 },
  { label: "ميل گرد", color: "#e66c37", h: 116 },
];
const second: Tile[] = [
  { label: "لوازم خانگي", color: "#6b007b", h: 112 },
  { label: "سيمان فله تيپ 2", color: "#e044a7", h: 111.5 },
  { label: "تخم مرغ", color: "#744ec2", h: 94 },
  { label: "انواع قير", color: "#d9b300", h: 90.5 },
];
const top: [Tile, number][] = [
  [{ label: "انواع لوله ...", color: "#d64550", h: 182 }, 92],
  [{ label: "كانتينر خا...", color: "#197278", h: 182 }, 86.5],
  [{ label: "كيسه م...", color: "#1aab40", h: 182 }, 77],
];
const third: Tile[] = [
  { label: "پودرسنگ", color: "#15c6f4", h: 78.5 },
  { label: "روغن صنعتي", color: "#4092ff", h: 75 },
  { label: "شمش آهن", color: "#ffa058", h: 72.5 },
];
const fourth: Tile[] = [
  { label: "كيسه جامبو", color: "#be5dc9", h: 118 },
  { label: "كلينگر", color: "#f472d0", h: 108 },
];

@customElement("treemap-visual")
class TreemapVisual extends LitElement {
  static styles = css`
    :host { display: flex; flex-direction: column; box-sizing: border-box; border: 1.500px solid #2d4f2b; border-radius: 12px; overflow: hidden; background: #fff; }
    .title { height: 46px; flex: none; background: #2d4f2b; color: #fff; text-align: center; font: 700 18.100px/49px "DejaVu Sans Condensed", "DejaVu Sans", sans-serif; letter-spacing: 0; direction: rtl; padding-left: 6px; }
    .tile { box-sizing: border-box; border: 1px solid rgba(255, 255, 255, 0.850); padding: 3px 0 0 4.500px; color: #fff; font: 16px/24px "Open Sans", "DejaVu Sans", sans-serif; white-space: nowrap; overflow: hidden; letter-spacing: 0; }
    .map { display: flex; flex: 1; }
    .col, .right { display: flex; flex-direction: column; }
    .row { display: flex; }
  `;
  private tile(t: Tile, w: number) {
    return html`<div class="tile" style=${styleMap({ width: w + "px", height: t.h + "px", background: t.color })}>${t.label}</div>`;
  }
  private col(list: Tile[], w: number) {
    return html`<div class="col">${list.map((t) => this.tile(t, w))}</div>`;
  }
  render() {
    return html`<div class="title">مجموع کرایه محاباتی براساس نام کالا</div>
      <div class="map">
        ${this.col(first, 217)}${this.col(second, 208)}
        <div class="right">
          <div class="row">${top.map(([t, w]) => this.tile(t, w))}</div>
          <div class="row">${this.col(third, 160)}${this.col(fourth, 95.5)}</div>
        </div>
      </div>`;
  }
}

@customElement("report-canvas")
class ReportCanvas extends LitElement {
  static styles = css`
    :host { position: relative; display: block; overflow: hidden; background: #fff; flex: 1; }
    .page { position: absolute; left: 32px; top: -20px; width: 1308px; height: 753px; border: 2px dotted #605e5c; }
    matrix-visual { position: absolute; left: 34.500px; top: 42px; width: 962.500px; height: 223.500px; }
    trend-visual { position: absolute; left: 35px; top: 266px; width: 622px; height: 327px; }
    treemap-visual { position: absolute; left: 657.500px; top: 277px; width: 684px; height: 457px; }
    .tools { position: absolute; left: 1247px; top: 252px; display: flex; gap: 15px; }
  `;
  render() {
    return html`<div class="page"></div>
      <matrix-visual></matrix-visual><trend-visual></trend-visual><treemap-visual></treemap-visual>
      <div class="tools"><pb-icon name="filter"></pb-icon><pb-icon name="focus"></pb-icon><pb-icon name="dots"></pb-icon></div>`;
  }
}

const pages: [string, number][] = [["tooltipchart(30 Toppest drivers)", 258], ["tooltipchart(30 toppest drivers2)", 265], ["map", 80], ["anomaly detection", 174], ["forecast", 104], ["effections", 115.5], ["others1", 101], ["others2", 100]];

@customElement("page-tabs")
class PageTabs extends LitElement {
  static styles = css`
    :host { display: flex; height: 44px; background: #fff; font-size: 14.400px; letter-spacing: -0.140px; color: #252423; flex: none; }
    .nav { width: 159px; box-sizing: border-box; background: #f3f2f1; border-right: 1px solid #8a8886; display: flex; padding-left: 13px; margin-right: 11px; flex: none; }
    .desk { width: 30px; display: flex; flex-direction: column; align-items: center; padding-top: 8px; box-sizing: border-box; }
    .bar { width: 30px; height: 3px; border-radius: 2px; background: #117865; margin-top: 7px; }
    .ph { margin: 6px 0 0 30px; }
    .arrow { margin: 15px 0 0 26px; }
    .arrow.next { margin-left: 22px; }
    .tab { box-sizing: border-box; border-left: 1px solid #c8c6c4; display: flex; align-items: center; justify-content: center; position: relative; flex: none; white-space: nowrap; }
    .active { font-weight: 600; border-right: 1px solid #c8c6c4; letter-spacing: -0.600px; }
    .active::after { content: ""; position: absolute; left: 0; right: 0; bottom: 0; height: 5px; background: #117865; }
    .x { position: absolute; right: 5px; top: 1px; font-size: 13px; line-height: 20px; }
    .add { flex: 1; background: #117865; display: flex; align-items: center; justify-content: center; padding-bottom: 3px; box-sizing: border-box; }
  `;
  render() {
    return html`<div class="nav">
        <div class="desk"><pb-icon name="monitor"></pb-icon><span class="bar"></span></div>
        <pb-icon class="ph" name="phone"></pb-icon>
        <svg class="arrow" width="6" height="12"><path d="M6 1v10L0 6z" fill="#000"></path></svg>
        <svg class="arrow next" width="6" height="12"><path d="M0 1v10l6-5z" fill="#bebbb8"></path></svg>
      </div>
      ${pages.map(([t, w]) => html`<div class=${classMap({ tab: true, active: t === "others1" })} style=${styleMap({ width: w + "px" })}>${t}${t === "others1" ? html`<span class="x">x</span>` : nothing}</div>`)}
      <div class="add"><svg width="14" height="14"><path d="M7 0v14M0 7h14" stroke="#fff" stroke-width="4"></path></svg></div>`;
  }
}

@customElement("viz-pane")
class VizPane extends LitElement {
  static styles = css`
    :host { display: flex; flex-direction: column; width: 227px; box-sizing: border-box; background: #f3f2f1; border-left: 1px solid #e1dfdd; border-right: 1px solid #e1dfdd; color: #252423; font-size: 14px; flex: none; }
    .head { display: flex; justify-content: space-between; align-items: center; height: 36px; margin-top: 5px; padding: 0 9px 0 10px; font-size: 19.200px; font-weight: 600; letter-spacing: -0.260px; }
    .sub { padding-left: 10px; line-height: 20px; margin-top: 6px; font-weight: 600; letter-spacing: -0.350px; }
    .modes { display: flex; padding: 4px 0 0 10px; align-items: center; }
    .mode { width: 40px; height: 40px; background: #d2d0ce; border-radius: 2px; display: flex; align-items: center; justify-content: center; }
    .fmt { margin-left: 47px; }
    .notch { display: block; margin-top: 5px; }
    .icons { display: grid; grid-template-columns: repeat(6, 35px); grid-auto-rows: 35px; padding: 13px 0 0 14px; }
    .dots { font-size: 18px; letter-spacing: 2px; line-height: 12px; padding-left: 15px; height: 36px; margin-top: -2px; box-sizing: border-box; }
    .wells { border-top: 1px solid #d8d6d4; padding: 11px 7px 0 5px; display: flex; flex-direction: column; font-size: 14.500px; letter-spacing: -0.140px; }
    .cap { padding-left: 10px; line-height: 20px; }
    .drill { margin: 14px 0 11px; font-weight: 600; color: #484644; letter-spacing: -0.450px; }
    .well { background: #fff; border: 1px dashed #b9b7b5; border-radius: 2px; height: 35px; margin-top: 6px; box-sizing: border-box; display: flex; align-items: center; padding-left: 12px; width: 213px; white-space: nowrap; }
    .well.low { height: 32px; margin-top: 13px; padding-left: 9px; letter-spacing: -0.040px; }
    .opt { display: flex; align-items: center; justify-content: space-between; padding: 0 20px 0 10px; height: 20px; }
    .opt + .opt { margin-top: 14px; }
    .tog { width: 40px; height: 20px; box-sizing: border-box; border: 1px solid #8a8886; border-radius: 10px; background: #fff; display: flex; align-items: center; padding-left: 5px; gap: 2px; font-size: 10.500px; color: #605e5c; }
    .tog i { width: 10px; height: 10px; border-radius: 50%; background: #605e5c; }
    .tog.on { background: #117865; border-color: #117865; color: #fff; gap: 4px; }
    .tog.on i { background: #fff; }
  `;
  render() {
    return html`<div class="head">Visualizations<pb-icon name="more"></pb-icon></div>
      <div class="sub">Build visual</div>
      <div class="modes"><div class="mode"><pb-icon name="build"></pb-icon></div><pb-icon class="fmt" name="format"></pb-icon></div>
      <svg class="notch" width="225" height="12"><path d="M0 10.500h20l10-9.500l10 9.500H225" fill="none" stroke="#a19f9d" stroke-width="1.200"></path></svg>
      <div class="icons">${Array.from({ length: 42 }, (_, i) => html`<pb-icon name=${"v" + i}></pb-icon>`)}</div>
      <div class="dots">...</div>
      <div class="wells">
        <div class="cap">Values</div>
        <div class="well">Add data fields here</div>
        <div class="cap drill">Drill through</div>
        <div class="opt">Cross-report<span class="tog"><i></i>Off</span></div>
        <div class="opt">Keep all filters<span class="tog on">On<i></i></span></div>
        <div class="well low">Add drill-through fields here</div>
      </div>`;
  }
}

const tables: [string, boolean][] = [["Calendar", true], ["iran_city_coords", false], ["Top_drivers", true], ["Top_product", true], ["transport_table", false], ["transport_table(group...", false], ["transport-coords(mer...", false]];

@customElement("data-pane")
class DataPane extends LitElement {
  static styles = css`
    :host { display: flex; flex-direction: column; flex: 1; background: #f3f2f1; color: #323130; }
    .head { display: flex; justify-content: space-between; align-items: center; height: 36px; margin-top: 5px; padding: 0 6px 0 10px; font-size: 19.200px; font-weight: 600; letter-spacing: -0.400px; color: #252423; }
    .search { display: flex; align-items: center; gap: 10px; height: 30px; margin: 15px 2px 11px 5px; box-sizing: border-box; background: #fff; border: 1px solid #d1d1d1; border-bottom-color: #616161; border-radius: 4px; padding: 1px 0 0 14px; font-size: 16.300px; color: #707070; letter-spacing: -0.200px; }
    .row { display: flex; align-items: center; height: 30px; padding-left: 19px; font-size: 14.400px; white-space: nowrap; letter-spacing: -0.150px; }
    .row .t { margin: 0 4px 0 7px; }
  `;
  render() {
    return html`<div class="head">Data<pb-icon name="more"></pb-icon></div>
      <div class="search"><pb-icon name="loupe"></pb-icon>Search</div>
      ${tables.map(([n, k]) => html`<div class="row"><pb-icon name="expand"></pb-icon><pb-icon class="t" name=${k ? "tblcalc" : "tbl"}></pb-icon>${n}</div>`)}`;
  }
}

const menu: [string, number][] = [["File", 82], ["Home", 48], ["Insert", 121], ["Modeling", 76], ["View", 114], ["Optimize", 69], ["Help", 116]];

@customElement("app-root")
class AppRoot extends LitElement {
  static styles = css`
    :host { display: flex; flex-direction: column; width: 1917px; height: 1020px; overflow: hidden; font-family: "Open Sans", "Noto Sans", sans-serif; background: #fff; color: #252423; }
    .titlebar { height: 43px; background: #3b3a37; color: #fff; display: flex; align-items: center; flex: none; font-size: 14.500px; letter-spacing: -0.100px; }
    .quick { display: flex; align-items: center; gap: 19px; padding-left: 20px; width: 839px; box-sizing: border-box; flex: none; }
    .doc { margin-left: -7px; padding-top: 5px; display: flex; align-items: center; gap: 9px; white-space: nowrap; }
    .find { width: 500px; height: 30px; margin-top: -1px; box-sizing: border-box; border-radius: 3px; background: #d4d4d2; color: #1f5f50; display: flex; align-items: center; gap: 14px; padding-left: 21px; font-size: 16.500px; letter-spacing: -0.150px; flex: none; margin-left: 20px; }
    .win { flex: 1; display: flex; align-items: center; justify-content: flex-end; padding-right: 17px; }
    .win .u { margin: 0 40px 0 12px; }
    .win .m { margin-right: 41px; }
    .menu { height: 38px; background: #fafafa; display: flex; flex: none; font-size: 16px; letter-spacing: -0.250px; }
    .tab { height: 38px; line-height: 40px; box-sizing: border-box; text-align: center; flex: none; white-space: nowrap; }
    .home { margin-left: 19px; font-weight: 600; border-bottom: 3px solid #117865; letter-spacing: -0.600px; }
    .share { margin: 5px 4px 0 auto; width: 105px; height: 30px; border-radius: 4px; background: #117865; color: #fff; display: flex; align-items: center; gap: 9px; box-sizing: border-box; padding: 0 0 1px 9px; font-size: 14.200px; font-weight: 500; letter-spacing: -0.400px; }
    .share svg { margin-left: -4px; }
    .main { flex: 1; display: flex; min-height: 0; position: relative; }
    .main::before { content: ""; position: absolute; left: 0; right: 0; top: 0; height: 5px; z-index: 1; background: linear-gradient(rgba(0, 0, 0, 0.100), rgba(0, 0, 0, 0)); }
    .rail { width: 51px; box-sizing: border-box; background: #f3f2f1; border-right: 1px solid #e1dfdd; display: flex; flex-direction: column; flex: none; }
    .rail div { height: 50px; display: flex; align-items: center; justify-content: center; box-sizing: border-box; padding: 0 3px 2px 0; border-left: 3px solid transparent; }
    .rail .on { border-left-color: #117865; height: 49px; }
    .rail div:last-child { padding-bottom: 0; }
    .center { width: 1417px; display: flex; flex-direction: column; flex: none; }
    .stage { flex: 1; display: flex; min-height: 0; }
    .filters { width: 41px; border-left: 1px solid #a5a5a5; box-sizing: border-box; display: flex; flex-direction: column; align-items: center; padding: 14px 0 0; background: #fff; flex: none; }
    .filters .f { margin: 19px 0 0 6px; }
    .filters span { writing-mode: vertical-rl; font-weight: 600; font-size: 18px; margin: 10px 0 0 1px; line-height: 20px; letter-spacing: -0.200px; }
    .status { height: 30px; box-sizing: border-box; background: #f3f2f1; border-top: 1px solid #e1dfdd; border-bottom: 1px solid #000; flex: none; display: flex; align-items: center; padding: 2px 3px 0 5px; font-size: 14.500px; letter-spacing: -0.050px; color: #484644; white-space: nowrap; }
    .zoom { margin-left: auto; margin-right: 17px; }
    .pct { color: #605e5c; margin-right: 24px; font-size: 14px; letter-spacing: -0.300px; }
    .fit { margin-right: 17px; }
    .upd { width: 239px; letter-spacing: -0.100px; }
  `;
  render() {
    return html`
      <div class="titlebar">
        <div class="quick"><pb-icon name="save"></pb-icon><pb-icon name="undo"></pb-icon><pb-icon name="redo"></pb-icon>
          <span class="doc">transport_df_power_bi • Last saved: 9/3/2025 at 12:11 AM<svg width="11" height="6"><path d="M0 0h11L5.500 6z" fill="#fff"></path></svg></span></div>
        <div class="find"><pb-icon name="find"></pb-icon>Search</div>
        <div class="win">Sign in<pb-icon class="u" name="user"></pb-icon><pb-icon class="m" name="min"></pb-icon><pb-icon class="m" name="max"></pb-icon><pb-icon name="close"></pb-icon></div>
      </div>
      <div class="menu">
        ${menu.map(([t, w]) => html`<div class=${classMap({ tab: true, home: t === "Home" })} style=${styleMap({ width: w + "px" })}>${t}</div>`)}
        <div class="share"><pb-icon name="share"></pb-icon>Share<svg width="13" height="9"><path d="M1 1.500l5.500 5.500l5.500-5.500" fill="none" stroke="#fff" stroke-width="1.600"></path></svg></div>
      </div>
      <pb-ribbon></pb-ribbon>
      <div class="main">
        <div class="rail">${["report", "table", "model", "dax"].map((n, i) => html`<div class=${classMap({ on: i === 0 })}><pb-icon name=${n}></pb-icon></div>`)}</div>
        <div class="center">
          <div class="stage"><report-canvas></report-canvas>
            <div class="filters"><pb-icon name="less"></pb-icon><pb-icon class="f" name="funnel"></pb-icon><span>Filters</span></div></div>
          <page-tabs></page-tabs>
        </div>
        <viz-pane></viz-pane>
        <data-pane></data-pane>
      </div>
      <div class="status">Page 9 of 10
        <svg class="zoom" width="154" height="16" viewBox="0 0 154 16"><path d="M0 8h6M144 8h10M149 3v10" stroke="#484644" stroke-width="1.800"></path><path d="M12 8.500h125M74.500 5v7" stroke="#605e5c" stroke-width="1"></path><path d="M60 2h5v13h-5z" fill="#605e5c"></path></svg>
        <span class="pct">82%</span><pb-icon class="fit" name="fit"></pb-icon><span class="upd">Update available (click to download)</span>
      </div>`;
  }
}
